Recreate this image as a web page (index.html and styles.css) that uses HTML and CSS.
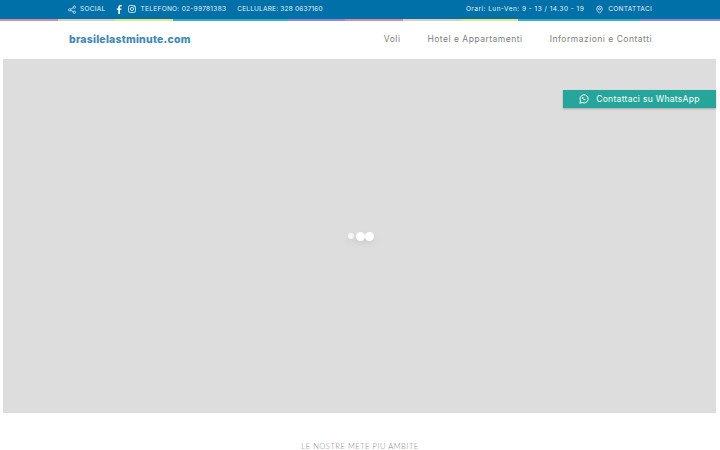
FILE: index.html
```html
<!DOCTYPE html>
<html lang="it">
<head>
  <meta charset="UTF-8">
  <meta name="viewport" content="width=device-width, initial-scale=1.0">
  <title>brasilelastminute.com</title>
  <link rel="stylesheet" href="styles.css">
</head>
<body>
  <!-- Top bar -->
  <div class="topbar">
    <div class="topbar-left">
      <span class="top-item">
        <svg width="8" height="9" viewBox="0 0 12 12" fill="none" stroke="#fff" stroke-width="1">
          <circle cx="2.5" cy="6.5" r="1.8"/><circle cx="9.5" cy="2.5" r="1.8"/><circle cx="9.5" cy="10" r="1.8"/>
          <path d="M4 5.6 8 3.4M4 7.4 8 9.2"/>
        </svg>
        SOCIAL
      </span>
      <span class="top-social">
        <svg width="6" height="9" viewBox="0 0 6 10" fill="#fff"><path d="M4 10V5.6h1.500L5.800 3.800H4V2.700c0-.5.200-.9.900-.9H6V.2C5.700.1 5.200 0 4.600 0 3.200 0 2.200.9 2.200 2.500v1.300H.5v1.800h1.700V10z"/></svg>
        <svg width="8" height="8" viewBox="0 0 10 10" fill="none" stroke="#fff" stroke-width="1"><rect x=".6" y=".6" width="8.800" height="8.800" rx="2.400"/><circle cx="5" cy="5" r="2"/><circle cx="7.600" cy="2.400" r=".3"/></svg>
      </span>
      <span class="top-item phone">TELEFONO: 02-99781383</span>
      <span class="top-item cell">CELLULARE: 328 0637160</span>
    </div>
    <div class="topbar-right">
      <span class="top-item hours">Orari: Lun-Ven: 9 - 13 / 14.30 - 19</span>
      <span class="top-item contact">
        <svg width="7" height="9" viewBox="0 0 10 12" fill="none" stroke="#fff" stroke-width="1"><path d="M5 11.300C2.600 9 1 7.200 1 5a4 4 0 0 1 8 0c0 2.200-1.600 4-4 6.300z"/><circle cx="5" cy="5" r="1.500"/></svg>
        CONTATTACI
      </span>
    </div>
  </div>
  <div class="rainbow">
    <span class="c1"></span><span class="c2"></span><span class="c3"></span><span class="c4"></span><span class="c5"></span>
    <span class="c1"></span><span class="c2"></span><span class="c3"></span><span class="c4"></span><span class="c5"></span>
  </div>

  <!-- Navigation -->
  <div class="navbar">
    <div class="logo">brasilelastminute.com</div>
    <div class="nav-links">
      <a href="#">Voli</a>
      <a href="#">Hotel e Appartamenti</a>
      <a href="#">Informazioni e Contatti</a>
    </div>
  </div>

  <!-- Hero, still loading -->
  <div class="hero">
    <a class="whatsapp" href="#">
      <svg width="10" height="10" viewBox="0 0 12 12" fill="none" stroke="#fff" stroke-width="1.200"><path d="M1 11l.8-2.800A4.900 4.900 0 1 1 3.800 10.200z"/><path d="M4.200 3.600c-.6.500-.5 1.400.3 2.400s1.800 1.600 2.700 1.400c.5-.2.700-.5.700-.9L7 5.900l-.6.500c-.6-.2-1.100-.8-1.300-1.300l.4-.6-.6-1z" fill="#fff" stroke="none"/></svg>
      Contattaci su WhatsApp
    </a>
    <div class="loader">
      <span class="dot small"></span><span class="dot"></span><span class="dot"></span>
    </div>
  </div>

  <div class="section-title">LE NOSTRE METE PIU AMBITE</div>
</body>
</html>
```

FILE: styles.css
```css
* {
  margin: 0;
  padding: 0;
  box-sizing: border-box;
}

html, body {
  height: 450px;
  overflow: hidden;
}

body {
  background-color: #fff;
  font-family: "Inter", "Noto Sans", sans-serif;
}

.topbar {
  height: 19px;
  padding-bottom: 1px;
  background-color: #0070a8;
  color: #e6f1f6;
  font-size: 6.500px;
  letter-spacing: 0.300px;
  padding-left: 68px;
  padding-right: 68px;
  display: flex;
  justify-content: space-between;
  align-items: center;
}

.topbar-left, .topbar-right, .top-item, .top-social {
  display: flex;
  align-items: center;
}

.topbar-right {
  gap: 12px;
}

.top-item {
  gap: 4px;
}

.top-social {
  gap: 6px;
  margin-left: 10px;
}

.phone {
  margin-left: 5px;
}

.cell {
  margin-left: 11px;
  letter-spacing: 0.200px;
}

.hours {
  letter-spacing: 0.480px;
}

.contact {
  gap: 5px;
}

.rainbow {
  height: 2px;
  display: grid;
  grid-template-columns: 58px 57px 58px 115px 57px 58px 58px 57px 122px 80px;
}

.c1 { background-color: #cf8fa8; }
.c2 { background-color: #dccdbb; }
.c3 { background-color: #e0e58c; }
.c4 { background-color: #38b0c4; }
.c5 { background-color: #9088d2; }

.navbar {
  height: 38px;
  padding: 0 68px 1px 69px;
  display: flex;
  justify-content: space-between;
  align-items: center;
}

.logo {
  font-weight: 800;
  font-size: 10.500px;
  letter-spacing: 0.220px;
  color: #4089b2;
}

.nav-links {
  display: flex;
  gap: 27px;
  margin-bottom: 1px;
}

.nav-links a {
  font-size: 8.500px;
  letter-spacing: 0.500px;
  color: #808080;
  text-decoration: none;
}

.hero {
  position: relative;
  height: 354px;
  margin: 0 4px 0 3px;
  background-color: #dddddd;
  display: flex;
  align-items: center;
  justify-content: center;
}

.whatsapp {
  position: absolute;
  top: 31px;
  right: 0;
  width: 153px;
  height: 18px;
  background-color: #26a69a;
  color: #fff;
  font-size: 8.500px;
  letter-spacing: 0.300px;
  text-decoration: none;
  display: flex;
  align-items: center;
  justify-content: center;
  gap: 7px;
  box-shadow: 0 1px 2px rgba(0, 0, 0, 0.25);
}

.loader {
  display: flex;
  align-items: center;
  gap: 0;
  margin-left: 2px;
}

.dot {
  width: 9px;
  height: 9px;
  border-radius: 50%;
  background-color: #fff;
  box-shadow: 0 3px 6px rgba(0, 0, 0, 0.08);
}

.dot.small {
  width: 6px;
  height: 6px;
  margin-right: 2px;
  background-color: #f6f6f6;
}

.section-title {
  margin-top: 31px;
  text-align: center;
  font-family: "Lato", sans-serif;
  font-weight: 300;
  font-size: 7.500px;
  line-height: 6px;
  letter-spacing: 0.550px;
  color: #888;
}
```
